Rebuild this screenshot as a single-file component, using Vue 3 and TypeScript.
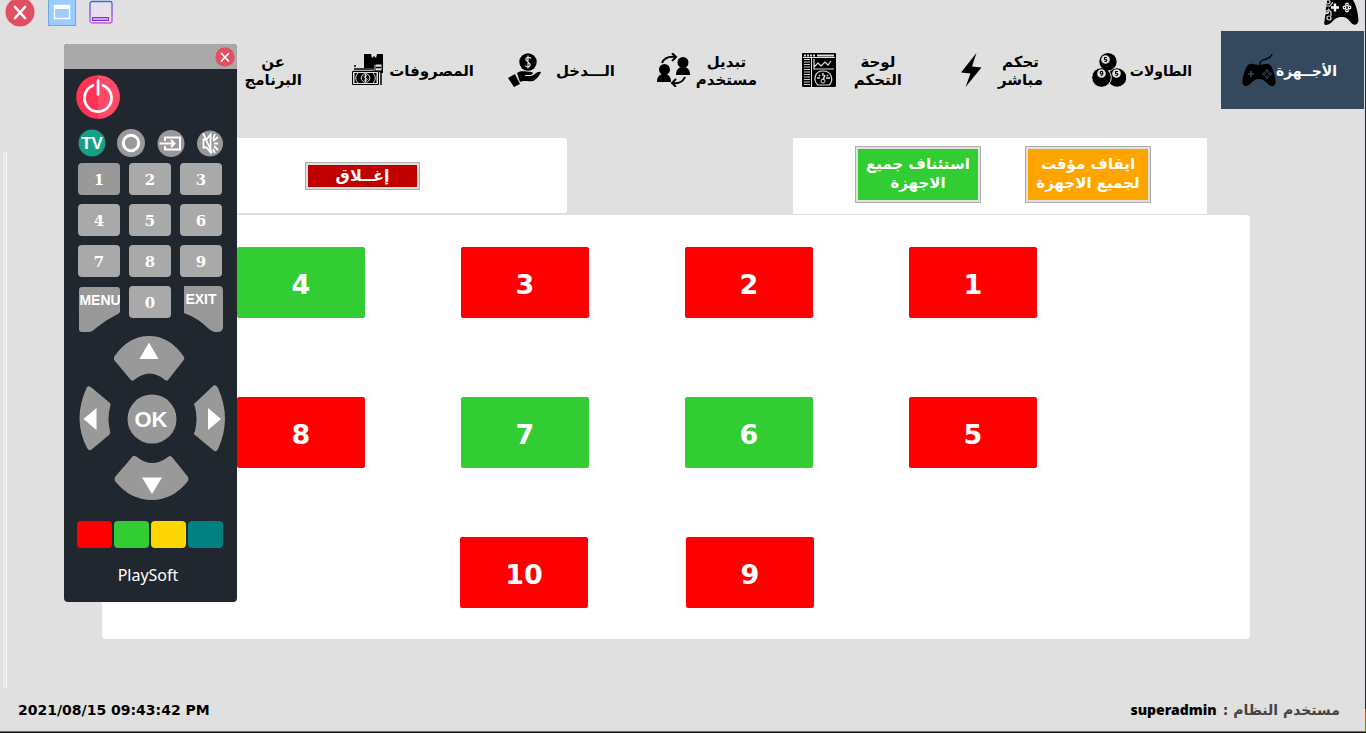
<script setup lang="ts">
import { ref } from 'vue'

interface NavItem { id: string; lines: string[] }
interface Device { id: number; busy: boolean }

const navItems: NavItem[] = [
  { id: 'devices', lines: ['الأجــهزة'] },
  { id: 'tables', lines: ['الطاولات'] },
  { id: 'live', lines: ['تحكم', 'مباشر'] },
  { id: 'dashboard', lines: ['لوحة', 'التحكم'] },
  { id: 'switch', lines: ['تبديل', 'مستخدم'] },
  { id: 'income', lines: ['الـــدخل'] },
  { id: 'expenses', lines: ['المصروفات'] },
  { id: 'about', lines: ['عن', 'البرنامج'] },
]
const active = ref('devices')

const on = [4, 6, 7]
const make = (ids: number[]): Device[] => ids.map((id) => ({ id, busy: !on.includes(id) }))
const rows: Device[][] = [make([1, 2, 3, 4]), make([5, 6, 7, 8]), make([9, 10])]

const keys = [1, 2, 3, 4, 5, 6, 7, 8, 9]
const colours = ['red', 'green', 'yellow', 'teal']
</script>

<template>
  <div class="shell">
    <header class="titlebar">
      <div class="window-buttons">
        <button class="plain" aria-label="Close">
          <svg width="30" height="27" viewBox="0 0 30 27"><circle cx="15" cy="12" r="14.500" fill="#e05060" /><path d="M10 7l10 11M20 7L10 18" stroke="#fff" stroke-width="2.600" stroke-linecap="round" /></svg>
        </button>
        <button class="plain" aria-label="Restore">
          <svg width="28" height="27" viewBox="0 0 28 27"><rect x=".5" y="-1" width="27" height="26.500" fill="#99ccff" stroke="#70a8dc" /><path d="M6.500 5.500h15v13h-15z" fill="none" stroke="#fff" stroke-width="1.400" /><path d="M6 5h16v4H6z" fill="#fff" /></svg>
        </button>
        <button class="plain" aria-label="Minimise">
          <svg width="24" height="27" viewBox="0 0 24 27">
            <defs><linearGradient id="edge" x1="0" y1="0" x2="0" y2="1"><stop offset="0" stop-color="#2f6df0" /><stop offset=".6" stop-color="#8b45f5" /><stop offset="1" stop-color="#c45cf2" /></linearGradient></defs>
            <rect x="1" y="1.500" width="22" height="21.500" rx="2" fill="#e6e0ea" stroke="url(#edge)" stroke-width="1.300" /><rect x="3.500" y="17.500" width="16" height="3" fill="#c0a4ef" stroke="#8a2be2" />
          </svg>
        </button>
      </div>
      <svg class="logo" width="36" height="26" viewBox="0 0 36 26">
        <path d="M4 0H30C33 5 35 12 35.500 20C35.500 24 32 26 29.500 24C27 22 25 18 22 17.500C19 16.500 15 17 12 19C9 22 6 25 3 25C1 25 1 23 1.500 21L3 8Z" />
        <path d="M8 7.500h8M12 3.500v8" stroke="#fff" stroke-width="2.400" />
        <g fill="none" stroke="#fff" stroke-width="1.200"><circle cx="21.500" cy="7.500" r="1.300" /><circle cx="26.500" cy="7.500" r="1.300" /><circle cx="24" cy="4.500" r="1.300" /><circle cx="24" cy="10.500" r="1.300" /></g>
        <g fill="none" stroke="#e0e0e0" stroke-width="1.200"><circle cx="5" cy="2" r="2" /><circle cx="4" cy="12" r="1.500" /><circle cx="6" cy="18" r="2" /><path d="M1 6h6l3-4M5 9l3 3v4M1 15l4-3" /></g>
      </svg>
    </header>

    <nav class="nav" dir="rtl">
      <button v-for="item in navItems" :key="item.id" class="nav-item" :class="[item.id, { active: active === item.id }]" @click="active = item.id">
        <span class="nav-label"><span v-for="line in item.lines" :key="line">{{ line }}</span></span>

        <svg v-if="item.id === 'devices'" width="34" height="34" viewBox="0 0 34 34">
          <path d="M18 12C17 4 28 9 30 1" fill="none" stroke="#000" stroke-width="1.300" />
          <path d="M8 11C11 10 13 12 17 12C21 12 23 10 26 11C30 12 31 17 33 24C34 29 34 32 31 33C26 34 24 26 17 26C10 26 8 34 3 33C0 32 0 29 1 24C3 17 4 12 8 11Z" />
          <path d="M6 21h6M9 18v6" stroke="#35495e" stroke-width="1.600" />
          <g fill="none" stroke="#35495e"><circle cx="22" cy="21" r="1.300" /><circle cx="28" cy="21" r="1.300" /><circle cx="25" cy="18" r="1.300" /><circle cx="25" cy="24" r="1.300" /></g>
        </svg>
        <svg v-else-if="item.id === 'tables'" width="34" height="34" viewBox="0 0 34 34">
          <circle cx="25" cy="24.500" r="9.300" /><circle cx="9.500" cy="24.500" r="9.800" stroke="#e0e0e0" /><circle cx="16" cy="8.700" r="8.700" />
          <g fill="#e0e0e0"><circle cx="13.500" cy="6.500" r="4.300" /><circle cx="9.500" cy="20.500" r="4.300" /><circle cx="24.500" cy="20.500" r="4.300" /></g>
          <g fill="none" stroke="#000" stroke-width="1.100"><path d="M15 4.500h-2.500v2c3-1 3 2 0 2M26 18.500h-2.500v2c3-1 3 2 0 2" /><circle cx="9.500" cy="19.700" r="1.300" /><path d="M10.800 20c0 2-1 2.500-2 2.500" /></g>
        </svg>
        <svg v-else-if="item.id === 'live'" width="34" height="34" viewBox="0 0 34 34"><path d="M21.500 0L6 19.500l9.500 1L10.500 34L26.500 14.500l-9.500-1z" /></svg>
        <svg v-else-if="item.id === 'dashboard'" width="34" height="34" viewBox="0 0 34 34">
          <rect width="34" height="34" rx="1" /><path d="M1 4.500h32M9.500 5v29" stroke="#e0e0e0" />
          <path d="M2 2.500h12" stroke="#e0e0e0" stroke-width="2" stroke-dasharray="2 1" /><path d="M15 2.500h17" stroke="#e0e0e0" stroke-width="2" />
          <path d="M5 6v27" stroke="#ccc" stroke-width="6" stroke-dasharray="1 1.500" /><path d="M12 6v10h20M12 14l4-4 3 3 4-4 3 3 3-4" fill="none" stroke="#e0e0e0" stroke-width="1.200" />
          <path d="M16 32C11 28 12 18 21 18S32 28 27 32Z" fill="none" stroke="#e0e0e0" stroke-width="1.200" /><path d="M15 25h3m6 0h4m-7-5v3m-4-1l1 1m8-1l-1 1" stroke="#e0e0e0" stroke-width="1.400" /><circle cx="21" cy="28" r="2" fill="none" stroke="#e0e0e0" /><path d="M21 27l2-5" stroke="#e0e0e0" stroke-width="1.500" />
        </svg>
        <svg v-else-if="item.id === 'switch'" width="34" height="34" viewBox="0 0 34 34">
          <circle cx="26" cy="9.500" r="5.500" /><path d="M19 22c0-5 2-8 7-8s7 3 7 8z" /><circle cx="7.500" cy="16.500" r="5.500" /><path d="M0 29c0-5 2-8 7-8s7 3 7 8z" />
          <g fill="none" stroke="#000" stroke-width="2"><path d="M5 10C7 5 12 3 19 4M15 0l4 4-4 4M28 24C26 29 22 31 15 30M19 26l-4 4 4 4" /></g>
        </svg>
        <svg v-else-if="item.id === 'income'" width="34" height="34" viewBox="0 0 34 34">
          <circle cx="20" cy="9" r="8.700" /><path d="M23 5.500c-2-2-6-1-5 1.500l4 4c1 3-3 4-5 1.500M20 2.500v13" fill="none" stroke="#e0e0e0" stroke-width="1.200" />
          <path d="M0 25l7-4 5 10-6 3zM9 20c5-3 8-1 15-1 2 1 0 3-2 3h-5v1h6c4-1 6-5 10-4-1 3-5 8-8 9-6 1-9-1-13 1z" />
        </svg>
        <svg v-else-if="item.id === 'expenses'" width="34" height="34" viewBox="0 0 34 34">
          <path d="M13 1h7l1 4 2-2 2 2 1-4h6v19h-2v-8h-7v3H13z" /><path d="M24 11h7v7h-7z" fill="#e0e0e0" stroke="#000" /><path d="M25 14.500h5M3 16h20M3 13h2M2 18.500h28V32" fill="none" stroke="#000" stroke-width="1.500" />
          <path d="M1.500 18.500h26v13h-26z" fill="#e0e0e0" stroke="#000" /><path d="M3.500 20h22v10h-22z" /><path d="M7 20c-3 3-3 7 0 10m15-10c3 3 3 7 0 10" fill="none" stroke="#e0e0e0" /><circle cx="14.500" cy="25" r="4.300" fill="none" stroke="#e0e0e0" />
          <path d="M16 23c-3-1-4 1-1.500 2s2 3-1.500 2M14.500 21v8" fill="none" stroke="#e0e0e0" />
        </svg>
      </button>
    </nav>

    <main class="stage">
      <div class="rail"></div>
      <div class="content">
        <div class="panels">
          <section class="panel end-panel"><button class="action stop">إغــلاق</button></section>
          <section class="panel bulk-panel">
            <button class="action resume"><span>استئناف جميع</span><span>الاجهزة</span></button>
            <button class="action pause"><span>ايقاف مؤقت</span><span>لجميع الاجهزة</span></button>
          </section>
        </div>
        <section class="card" dir="rtl">
          <div v-for="(row, i) in rows" :key="i" class="device-row" :class="{ last: i === 2 }">
            <button v-for="d in row" :key="d.id" class="device" :class="{ busy: d.busy }">{{ d.id }}</button>
          </div>
        </section>
      </div>
    </main>

    <footer class="status">
      <time>2021/08/15 09:43:42 PM</time>
      <div class="user" dir="rtl"><span class="caption">مستخدم النظام :</span><b>superadmin</b></div>
    </footer>

    <aside class="remote" aria-label="PlaySoft">
      <div class="remote-head">
        <button class="plain" aria-label="Close remote">
          <svg width="20" height="20" viewBox="0 0 20 20"><circle cx="10" cy="10" r="9.700" fill="#e05060" /><path d="M6.500 6.500l7 7.500M13.500 6.500l-7 7.500" stroke="#fff" stroke-width="1.700" stroke-linecap="round" /></svg>
        </button>
      </div>
      <div class="remote-body">
        <button class="plain power" aria-label="Power">
          <svg width="44" height="44" viewBox="0 0 44 44"><circle cx="22" cy="22" r="21.800" fill="#ff3355" /><path d="M22 .2a21.800 21.800 0 0 1 0 43.600z" fill="#ff4a68" /><path d="M17 10.500a13.500 13.500 0 1 0 10 0M22 5.500v14" fill="none" stroke="#fff" stroke-width="2.700" stroke-linecap="round" /></svg>
        </button>
        <div class="modes">
          <button class="plain" aria-label="TV mode"><svg width="28" height="28" viewBox="0 0 28 28"><circle cx="14" cy="14" r="13.500" fill="#16a085" /><text class="tv" x="14" y="19.500" text-anchor="middle">TV</text></svg></button>
          <button class="plain" aria-label="Record"><svg width="28" height="28" viewBox="0 0 28 28"><circle cx="14" cy="14" r="14" fill="#999" /><circle cx="14" cy="14" r="7.700" fill="none" stroke="#fff" stroke-width="3" /></svg></button>
          <button class="plain" aria-label="Input"><svg width="28" height="28" viewBox="0 0 28 28"><circle cx="14" cy="14.500" r="13.500" fill="#999" /><path d="M8 12V8.500h15v12H8V17M2.500 14.500h15M14 11l3.500 3.500-3.500 3.500" fill="none" stroke="#fff" stroke-width="2" /></svg></button>
          <button class="plain" aria-label="Mute"><svg width="28" height="28" viewBox="0 0 28 28"><circle cx="14" cy="14.500" r="13" fill="#999" /><path d="M7.500 10.500h3l4-5v18l-4-5h-3zM7 4l9 20M17 12l5-4M18 14.500h4M18 17l4 4M17 10l2-5M17 20l2 4" fill="none" stroke="#fff" stroke-width="1.800" /></svg></button>
        </div>
        <div class="keypad">
          <button v-for="k in keys" :key="k" class="key" :class="{ pressed: k === 1 }">{{ k }}</button>
          <button class="plain" aria-label="Menu"><svg width="42" height="46" viewBox="0 0 42 46"><path d="M4 1H39Q42 1 42 4V26Q41 28 38 29Q28 34 18 42Q14 46 11 46H4Q1 46 1 43V4Q1 1 4 1Z" fill="#999" /><text x="22" y="19" text-anchor="middle">MENU</text></svg></button>
          <button class="key">0</button>
          <button class="plain" aria-label="Exit"><svg width="43" height="46" viewBox="0 0 43 46"><path d="M4 0H39Q43 0 43 4V42Q42 46 38 46Q34 47 29 43Q18 32 4 27Z" fill="#999" /><text x="21" y="18" text-anchor="middle">EXIT</text></svg></button>
        </div>
        <div class="dpad">
          <button class="plain up" aria-label="Up"><svg width="76" height="47" viewBox="0 0 76 47"><path d="M0 22Q14 1 35 1T70 22Q71 24 69 26L54 45Q53 46 51 45Q36 32 20 45Q18 47 16 44L1 26Q-1 24 0 22Z" fill="#999" /><path d="M35 7.500L44.500 24h-19z" fill="#fff" /></svg></button>
          <button class="plain left" aria-label="Left"><svg width="32" height="67" viewBox="0 0 32 67"><path d="M8 2Q10 0 13 3L31 18Q32 19 31 22Q28 34 31 46Q32 48 30 50L12 65Q10 66 8 63Q-7 34 8 2Z" fill="#999" /><path d="M4.500 34L17.500 23v22z" fill="#fff" /></svg></button>
          <button class="plain ok" aria-label="OK"><svg width="50" height="52" viewBox="0 0 50 52"><circle cx="25" cy="26" r="24.500" fill="#999" /><text x="24" y="34" text-anchor="middle">OK</text></svg></button>
          <button class="plain right" aria-label="Right"><svg width="32" height="67" viewBox="0 0 32 67"><path d="M1 19L20 1Q23-1 25 3Q39 34 25 64Q23 68 20 65L2 50Q0 49 2 46Q5 34 2 22Q1 20 1 19Z" fill="#999" /><path d="M28 34L15 23v22z" fill="#fff" /></svg></button>
          <button class="plain down" aria-label="Down"><svg width="76" height="46" viewBox="0 0 76 46"><path d="M19 1Q20 0 23 2Q38 14 54 2Q56 0 58 2L74 22Q75 24 74 26Q59 45 38 45Q16 45 1 26Q0 24 1 22Z" fill="#999" /><path d="M38 39L28 22.500h20z" fill="#fff" /></svg></button>
        </div>
        <div class="colours"><button v-for="c in colours" :key="c" :class="c" :aria-label="c"></button></div>
        <div class="brand">PlaySoft</div>
      </div>
    </aside>
  </div>
</template>

<style>
body { background: #e0e0e0; }
</style>

<style scoped>
* { box-sizing: border-box; }
.shell {
  position: relative;
  display: flex;
  flex-direction: column;
  min-height: 100vh;
  background: #e0e0e0;
  border-right: 1px solid #26262a;
  border-bottom: 1px solid #111;
  font-family: "DejaVu Sans", sans-serif;
  font-size: 16px;
  color: #000;
}
.shell::after { content: ""; position: absolute; right: -1px; bottom: 0; width: 1px; height: 23px; background: #c8530c; }
button { font: inherit; color: inherit; margin: 0; padding: 0; border: 0; cursor: pointer; }
.plain { background: none; display: block; line-height: 0; }
svg { display: block; flex: none; }
.titlebar { display: flex; justify-content: space-between; height: 31px; padding: 0 6px 0 5px; }
.window-buttons { display: flex; align-items: flex-start; gap: 13px; }
.nav { display: grid; grid-template-columns: repeat(8, minmax(0, 1fr)); gap: 2px; height: 78px; padding: 0 1px 0 206px; }
.nav-item {
  display: flex;
  align-items: center;
  justify-content: space-between;
  padding: 0 27px 0 16px;
  background: transparent;
  font-size: 15px;
  font-weight: 700;
  line-height: 18px;
  white-space: nowrap;
}
.nav-item.devices, .nav-item.tables { font-size: 14px; }
.nav-item.active { background: #35495e; color: #fff; padding-left: 21px; }
.nav-item.live { padding-left: 24px; padding-right: 31px; }
.nav-item.income { padding-left: 12px; padding-right: 24px; }
.nav-item.expenses { padding: 0 20px 0 0; }
.nav-item.about { padding-right: 47px; }
.nav-label { display: flex; flex-direction: column; align-items: center; padding-top: 2px; }
.stage { display: flex; flex: 1; padding: 29px 115px 0 3px; }
.rail { width: 4px; margin: 14px 95px 0 0; border-left: 2px solid #efefef; border-right: 1px solid #fff; }
.content { flex: 1; min-width: 0; padding-bottom: 49px; }
.panels { display: flex; justify-content: space-between; align-items: flex-start; padding-right: 43px; margin-bottom: 1px; }
.panel { display: flex; align-items: center; background: #fff; height: 76px; }
.end-panel { width: 465px; height: 75px; border-radius: 3px; justify-content: flex-end; padding-right: 147px; }
.bulk-panel { width: 414px; justify-content: flex-end; gap: 44px; padding: 0 56px 4px 0; }
.action {
  display: flex;
  flex-direction: column;
  align-items: center;
  justify-content: center;
  width: 126px;
  height: 57px;
  border: 1px solid #adadad;
  box-shadow: inset 0 0 0 2px #e1e1e1;
  color: #fff;
  font-weight: 700;
  font-size: 15px;
  line-height: 19px;
  white-space: nowrap;
}
.resume { background: #32cd32; }
.pause { background: #ffa500; }
.stop { width: 115px; height: 28px; background: #c00000; font-size: 16px; }
.card { background: #fff; border-radius: 4px; padding: 32px 213px 31px 135px; }
.device-row { display: flex; justify-content: space-between; margin-bottom: 79px; }
.device-row:nth-child(2) { margin-bottom: 69px; }
.device-row.last { justify-content: center; gap: 98px; margin-bottom: 0; }
.device { width: 128px; height: 71px; padding-top: 4px; border-radius: 2px; background: #32cd32; color: #fff; font-size: 27px; font-weight: 700; }
.device.busy { background: #f00; }
.status {
  display: flex;
  align-items: center;
  justify-content: space-between;
  height: 44px;
  padding: 0 25px 0 18px;
  border-bottom: 1px solid #c8530c;
  font-size: 14px;
  font-weight: 700;
}
.user { display: flex; align-items: center; gap: 6px; }
.user b { font-family: "Noto Sans", sans-serif; }
.caption { color: #444; }

.remote { position: absolute; left: 64px; top: 44px; width: 173px; border-radius: 4px; overflow: hidden; background: #21272f; color: #fff; }
.remote-head { display: flex; justify-content: flex-end; align-items: center; height: 25px; padding-right: 2px; background: #a9a9a9; }
.remote-body { padding: 6px 12px 15px; }
.modes { display: flex; justify-content: space-between; margin: 10px 0 6px; padding: 0 1px 0 2px; }
.keypad { display: grid; grid-template-columns: repeat(3, 42px); gap: 9px; padding-left: 2px; height: 169px; align-items: start; }
.key { height: 32px; padding-top: 2px; border-radius: 4px; background: #a9a9a9; font-family: "DejaVu Serif", serif; font-size: 15px; font-weight: 700; }
.pressed { background: #999; }
svg text { fill: #fff; font-family: "Liberation Sans", Arial, sans-serif; font-size: 14px; font-weight: 700; }
svg text.tv { font-size: 17px; }
.ok text { font-size: 22px; }
.dpad { display: grid; grid-template-columns: 32px 76px 32px; gap: 3px; padding: 3px 0 0 3px; }
.up { grid-column: 2; }
.left { grid-column: 1; }
.ok { justify-self: center; align-self: center; }
.down { grid-column: 2; }
.colours { display: flex; gap: 2px; margin: 20px 0 15px 1px; }
.colours button { width: 35px; height: 27px; border-radius: 4px; }
.red { background: #f00; }
.green { background: #32cd32; }
.yellow { background: #ffd700; }
.teal { background: #008080; }
.brand { text-align: center; padding-right: 5px; font-family: "Noto Sans", sans-serif; font-size: 16px; line-height: 24px; }
</style>
